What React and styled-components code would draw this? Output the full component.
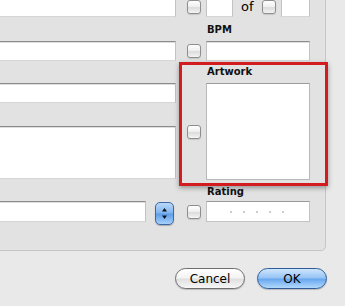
import React from "react";
import styled, { createGlobalStyle } from "styled-components";

const GlobalStyle = createGlobalStyle`
  body {
    margin: 0;
    background: #e9e9e9;
    font-family: "DejaVu Sans", "Noto Sans", sans-serif;
  }
`;

const Window = styled.div`
  width: 345px;
  height: 306px;
  overflow: hidden;
  background: #e9e9e9;
  display: flex;
  flex-direction: column;
`;

const Panel = styled.div`
  box-sizing: border-box;
  width: 340px;
  height: 261px;
  margin: -10px 0 0 -14px;
  padding: 6px 0 0 9px;
  background: #e2e2e2;
  border: 1px solid #c6c6c6;
  border-radius: 5px;
  display: flex;
  gap: 11px;
`;

const LeftColumn = styled.div`
  width: 180px;
  display: flex;
  flex-direction: column;
`;

const RightColumn = styled.div`
  width: 123px;
  display: flex;
  flex-direction: column;
`;

const Field = styled.div`
  box-sizing: border-box;
  flex: ${(p) => (p.$grow ? "1 1 0" : "none")};
  width: ${(p) => (p.$w ? `${p.$w}px` : "auto")};
  height: ${(p) => p.$h || 20}px;
  margin-top: ${(p) => p.$mt || 0}px;
  background: #fff;
  border: 1px solid #c3c3c3;
  border-top-color: #8c8c8c;
  border-bottom-color: #d6d6d6;
  box-shadow: inset 0 1px 0 #dedede;
`;

const PopupRow = styled.div`
  display: flex;
  align-items: flex-start;
  margin-top: 22px;
`;

const Stepper = styled.div`
  box-sizing: border-box;
  width: 19px;
  height: 23px;
  margin: 1px 0 0 9px;
  border: 1px solid #3d68a6;
  border-radius: 5px;
  background: linear-gradient(#b9d8f8, #7fb4ef 48%, #5b9ce9 52%, #a6d0fa);
  box-shadow: 0 1px 1px rgba(0, 0, 0, 0.25);
  display: flex;
  align-items: center;
  justify-content: center;
`;

const Row = styled.div`
  display: flex;
  align-items: center;
  gap: 5px;
  margin-top: ${(p) => p.$mt || 0}px;
`;

const Check = styled.span`
  box-sizing: border-box;
  flex: none;
  width: 14px;
  height: 14px;
  margin-left: ${(p) => p.$ml || 0}px;
  border: 1px solid #8e8e8e;
  border-radius: 3px;
  background: linear-gradient(#ffffff, #f0f0f0 45%, #dcdcdc 55%, #f4f4f4);
  box-shadow: 0 1px 1px rgba(0, 0, 0, 0.12);
`;

const Of = styled.span`
  font-size: 13px;
  line-height: 16px;
  color: #000;
  margin-left: 3px;
`;

const Label = styled.div`
  font-weight: bold;
  font-size: 10px;
  line-height: 12px;
  color: #111;
  padding-left: 20px;
  margin-top: ${(p) => p.$mt || 0}px;
`;

const Highlight = styled.div`
  position: relative;
  z-index: 1;
  margin: 1px -18px 0 -8px;
  padding: 1px 15px 3px 5px;
  border: 3px solid #d21c1f;
  box-shadow: 0 2px 5px rgba(0, 0, 0, 0.35);
`;

const Well = styled.div`
  box-sizing: border-box;
  width: 104px;
  height: 97px;
  background: #fff;
  border: 1px solid #b8b8b8;
  border-top-color: #9c9c9c;
`;

const Dots = styled.div`
  box-sizing: border-box;
  width: 104px;
  height: 21px;
  padding-left: 23px;
  background: #fff;
  border: 1px solid #c3c3c3;
  border-top-color: #9a9a9a;
  display: flex;
  align-items: center;
  gap: 11px;
`;

const Dot = styled.span`
  width: 2px;
  height: 2px;
  border-radius: 50%;
  background: #bdbdbd;
`;

const Footer = styled.div`
  display: flex;
  justify-content: flex-end;
  gap: 12px;
  padding-right: 18px;
  margin-top: 17px;
`;

const Button = styled.button`
  box-sizing: border-box;
  width: 70px;
  height: 21px;
  padding: 0;
  border-radius: 11px;
  font-family: "DejaVu Sans", sans-serif;
  font-size: 12px;
  color: #000;
  border: 1px solid ${(p) => (p.$primary ? "#2f5c98" : "#6e6e6e")};
  background: ${(p) =>
    p.$primary
      ? "linear-gradient(#cfe5fc, #94c3f5 48%, #66a6ee 52%, #b2d9fc)"
      : "linear-gradient(#ffffff, #f3f3f3 48%, #dfdfdf 52%, #f7f7f7)"};
  box-shadow: 0 1px 1px rgba(0, 0, 0, 0.2);
`;

function Arrows() {
  return (
    <svg width="7" height="13" viewBox="0 0 7 13">
      <path d="M3.5 1 L6 4.5 L1 4.5 Z" fill="#111" />
      <path d="M3.5 12 L6 8.5 L1 8.5 Z" fill="#111" />
    </svg>
  );
}

export default function App() {
  return (
    <Window>
      <GlobalStyle />
      <Panel>
        <LeftColumn>
          <Field $h={20} />
          <Field $h={20} $mt={24} />
          <Field $h={20} $mt={22} />
          <Field $h={53} $mt={23} />
          <PopupRow>
            <Field $w={150} $h={21} />
            <Stepper>
              <Arrows />
            </Stepper>
          </PopupRow>
        </LeftColumn>
        <RightColumn>
          <Row>
            <Check />
            <Field $w={27} $h={20} />
            <Of>of</Of>
            <Check $ml={3} />
            <Field $w={29} $h={20} />
          </Row>
          <Label $mt={7}>BPM</Label>
          <Row $mt={5}>
            <Check />
            <Field $grow $h={20} />
          </Row>
          <Highlight>
            <Label>Artwork</Label>
            <Row $mt={5}>
              <Check />
              <Well />
            </Row>
          </Highlight>
          <Label>Rating</Label>
          <Row $mt={3}>
            <Check />
            <Dots>
              {[0, 1, 2, 3, 4].map((i) => (
                <Dot key={i} />
              ))}
            </Dots>
          </Row>
        </RightColumn>
      </Panel>
      <Footer>
        <Button>Cancel</Button>
        <Button $primary>OK</Button>
      </Footer>
    </Window>
  );
}
